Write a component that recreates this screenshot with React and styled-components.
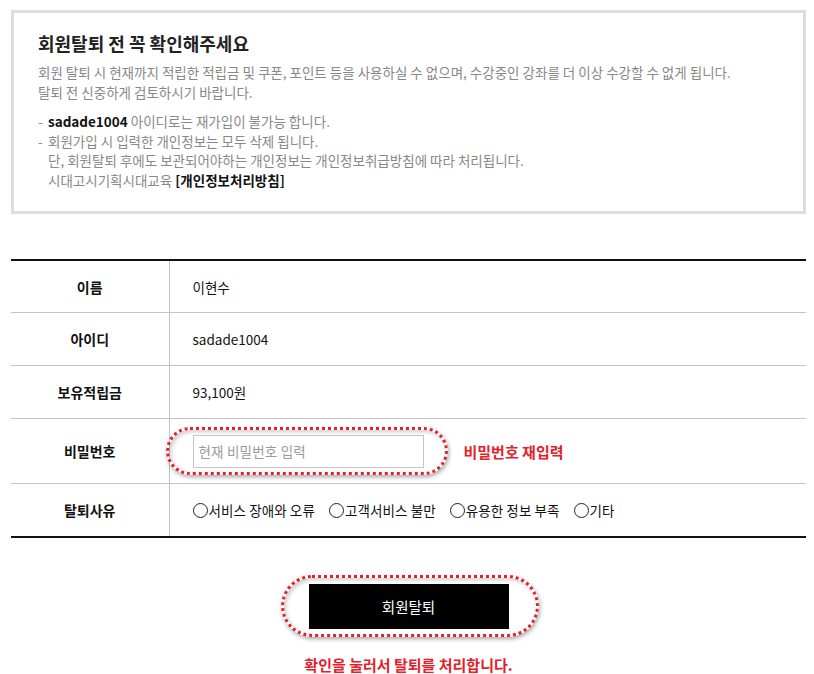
import React from "react";
import styled, { createGlobalStyle } from "styled-components";

const Global = createGlobalStyle`
  html, body { margin: 0; padding: 0; background: #fff; }
  body { font-family: "Noto Sans CJK KR", "Noto Sans", sans-serif; color: #222; }
  * { box-sizing: border-box; }
`;

const Page = styled.div`
  width: 814px;
  padding: 10px 8px 0 11px;
`;

const Notice = styled.section`
  border: 3px solid #dedede;
  padding: 18px 24px 20px 24px;
`;

const Title = styled.h2`
  margin: 0 0 7px;
  font-size: 18px;
  font-weight: 700;
  letter-spacing: 0;
  line-height: 24px;
  color: #222;
`;

const Para = styled.p`
  margin: 0;
  font-size: 13.5px;
  letter-spacing: 0;
  line-height: 20px;
  color: #888;
`;

const List = styled.ul`
  list-style: none;
  margin: 10px 0 0;
  padding: 0;
  font-size: 13.5px;
  letter-spacing: 0;
  line-height: 19.7px;
  color: #888;
`;

const Item = styled.li`
  padding-left: 10px;
  position: relative;
  &::before {
    content: "-";
    position: absolute;
    left: 0;
  }
`;

const Strong = styled.b`
  color: #111;
  font-weight: 700;
`;

const Table = styled.table`
  width: 100%;
  margin-top: 45px;
  border-collapse: collapse;
  border-top: 2px solid #111;
  border-bottom: 2px solid #111;
`;

const Row = styled.tr`
  height: ${(p) => p.$h}px;
  & + & { border-top: 1px solid #c4c4c4; }
`;

const Th = styled.th`
  width: 158px;
  border-right: 1px solid #c4c4c4;
  font-size: 14px;
  font-weight: 700;
  letter-spacing: 0;
  color: #111;
  text-align: center;
  padding: 0;
`;

const Td = styled.td`
  padding: 0 0 0 23px;
  font-size: 13.5px;
  letter-spacing: 0;
  color: #111;
`;

const PwWrap = styled.div`
  display: flex;
  align-items: center;
  gap: 40px;
`;

const InputBox = styled.div`
  position: relative;
  width: 231px;
  height: 33px;
`;

const Input = styled.input`
  width: 100%;
  height: 100%;
  border: 1px solid #c6c6c6;
  padding: 0 5px;
  font-family: inherit;
  font-size: 13.5px;
  letter-spacing: 0.2px;
  outline: none;
  &::placeholder { color: #9a9a9a; }
`;

const Highlight = styled.div`
  position: absolute;
  top: ${(p) => p.$t}px;
  bottom: ${(p) => p.$b}px;
  left: ${(p) => p.$l}px;
  right: ${(p) => p.$r}px;
  border: 3px dotted #e3212b;
  border-radius: ${(p) => p.$r2}px;
  box-shadow: 1px 2px 4px rgba(0, 0, 0, 0.35), inset 2px 2px 4px rgba(0, 0, 0, 0.2);
  pointer-events: none;
`;

const RedNote = styled.span`
  color: #e3212b;
  font-size: 15px;
  font-weight: 700;
  letter-spacing: 0;
`;

const Radios = styled.div`
  display: flex;
  align-items: center;
  gap: 14px;
`;

const RadioLabel = styled.label`
  display: flex;
  align-items: center;
  gap: 1px;
  font-size: 13.5px;
  letter-spacing: 0.1px;
  color: #111;
`;

const Circle = styled.span`
  width: 15px;
  height: 15px;
  border: 1px solid #222;
  border-radius: 50%;
  display: inline-block;
`;

const Actions = styled.div`
  display: flex;
  flex-direction: column;
  align-items: center;
  padding-top: 46px;
`;

const BtnWrap = styled.div`
  position: relative;
`;

const Button = styled.button`
  width: 200px;
  height: 45px;
  background: #000;
  color: #fff;
  border: 0;
  font-family: inherit;
  font-size: 14.5px;
  letter-spacing: 0;
`;

const Bottom = styled.p`
  margin: 26px 0 0;
  color: #e3212b;
  font-size: 15px;
  font-weight: 700;
  letter-spacing: 0;
  line-height: 20px;
`;

const reasons = ["서비스 장애와 오류", "고객서비스 불만", "유용한 정보 부족", "기타"];

export default function App() {
  return (
    <>
      <Global />
      <Page>
        <Notice>
          <Title>회원탈퇴 전 꼭 확인해주세요</Title>
          <Para>
            회원 탈퇴 시 현재까지 적립한 적립금 및 쿠폰, 포인트 등을 사용하실 수 없으며, 수강중인 강좌를 더 이상 수강할 수 없게 됩니다.
            <br />
            탈퇴 전 신중하게 검토하시기 바랍니다.
          </Para>
          <List>
            <Item>
              <Strong>sadade1004</Strong> 아이디로는 재가입이 불가능 합니다.
            </Item>
            <Item>
              회원가입 시 입력한 개인정보는 모두 삭제 됩니다.
              <br />
              단, 회원탈퇴 후에도 보관되어야하는 개인정보는 개인정보취급방침에 따라 처리됩니다.
              <br />
              시대고시기획시대교육 <Strong>[개인정보처리방침]</Strong>
            </Item>
          </List>
        </Notice>

        <Table>
          <tbody>
            <Row $h={53}>
              <Th>이름</Th>
              <Td>이현수</Td>
            </Row>
            <Row $h={53}>
              <Th>아이디</Th>
              <Td>sadade1004</Td>
            </Row>
            <Row $h={53}>
              <Th>보유적립금</Th>
              <Td>93,100원</Td>
            </Row>
            <Row $h={65}>
              <Th>비밀번호</Th>
              <Td>
                <PwWrap>
                  <InputBox>
                    <Input type="password" placeholder="현재 비밀번호 입력" />
                    <Highlight $t={-8} $b={-7} $l={-27} $r={-24} $r2={26} />
                  </InputBox>
                  <RedNote>비밀번호 재입력</RedNote>
                </PwWrap>
              </Td>
            </Row>
            <Row $h={53}>
              <Th>탈퇴사유</Th>
              <Td>
                <Radios>
                  {reasons.map((r) => (
                    <RadioLabel key={r}>
                      <Circle />
                      {r}
                    </RadioLabel>
                  ))}
                </Radios>
              </Td>
            </Row>
          </tbody>
        </Table>

        <Actions>
          <BtnWrap>
            <Button>회원탈퇴</Button>
            <Highlight $t={-9} $b={-8} $l={-28} $r={-30} $r2={31} />
          </BtnWrap>
          <Bottom>확인을 눌러서 탈퇴를 처리합니다.</Bottom>
        </Actions>
      </Page>
    </>
  );
}
